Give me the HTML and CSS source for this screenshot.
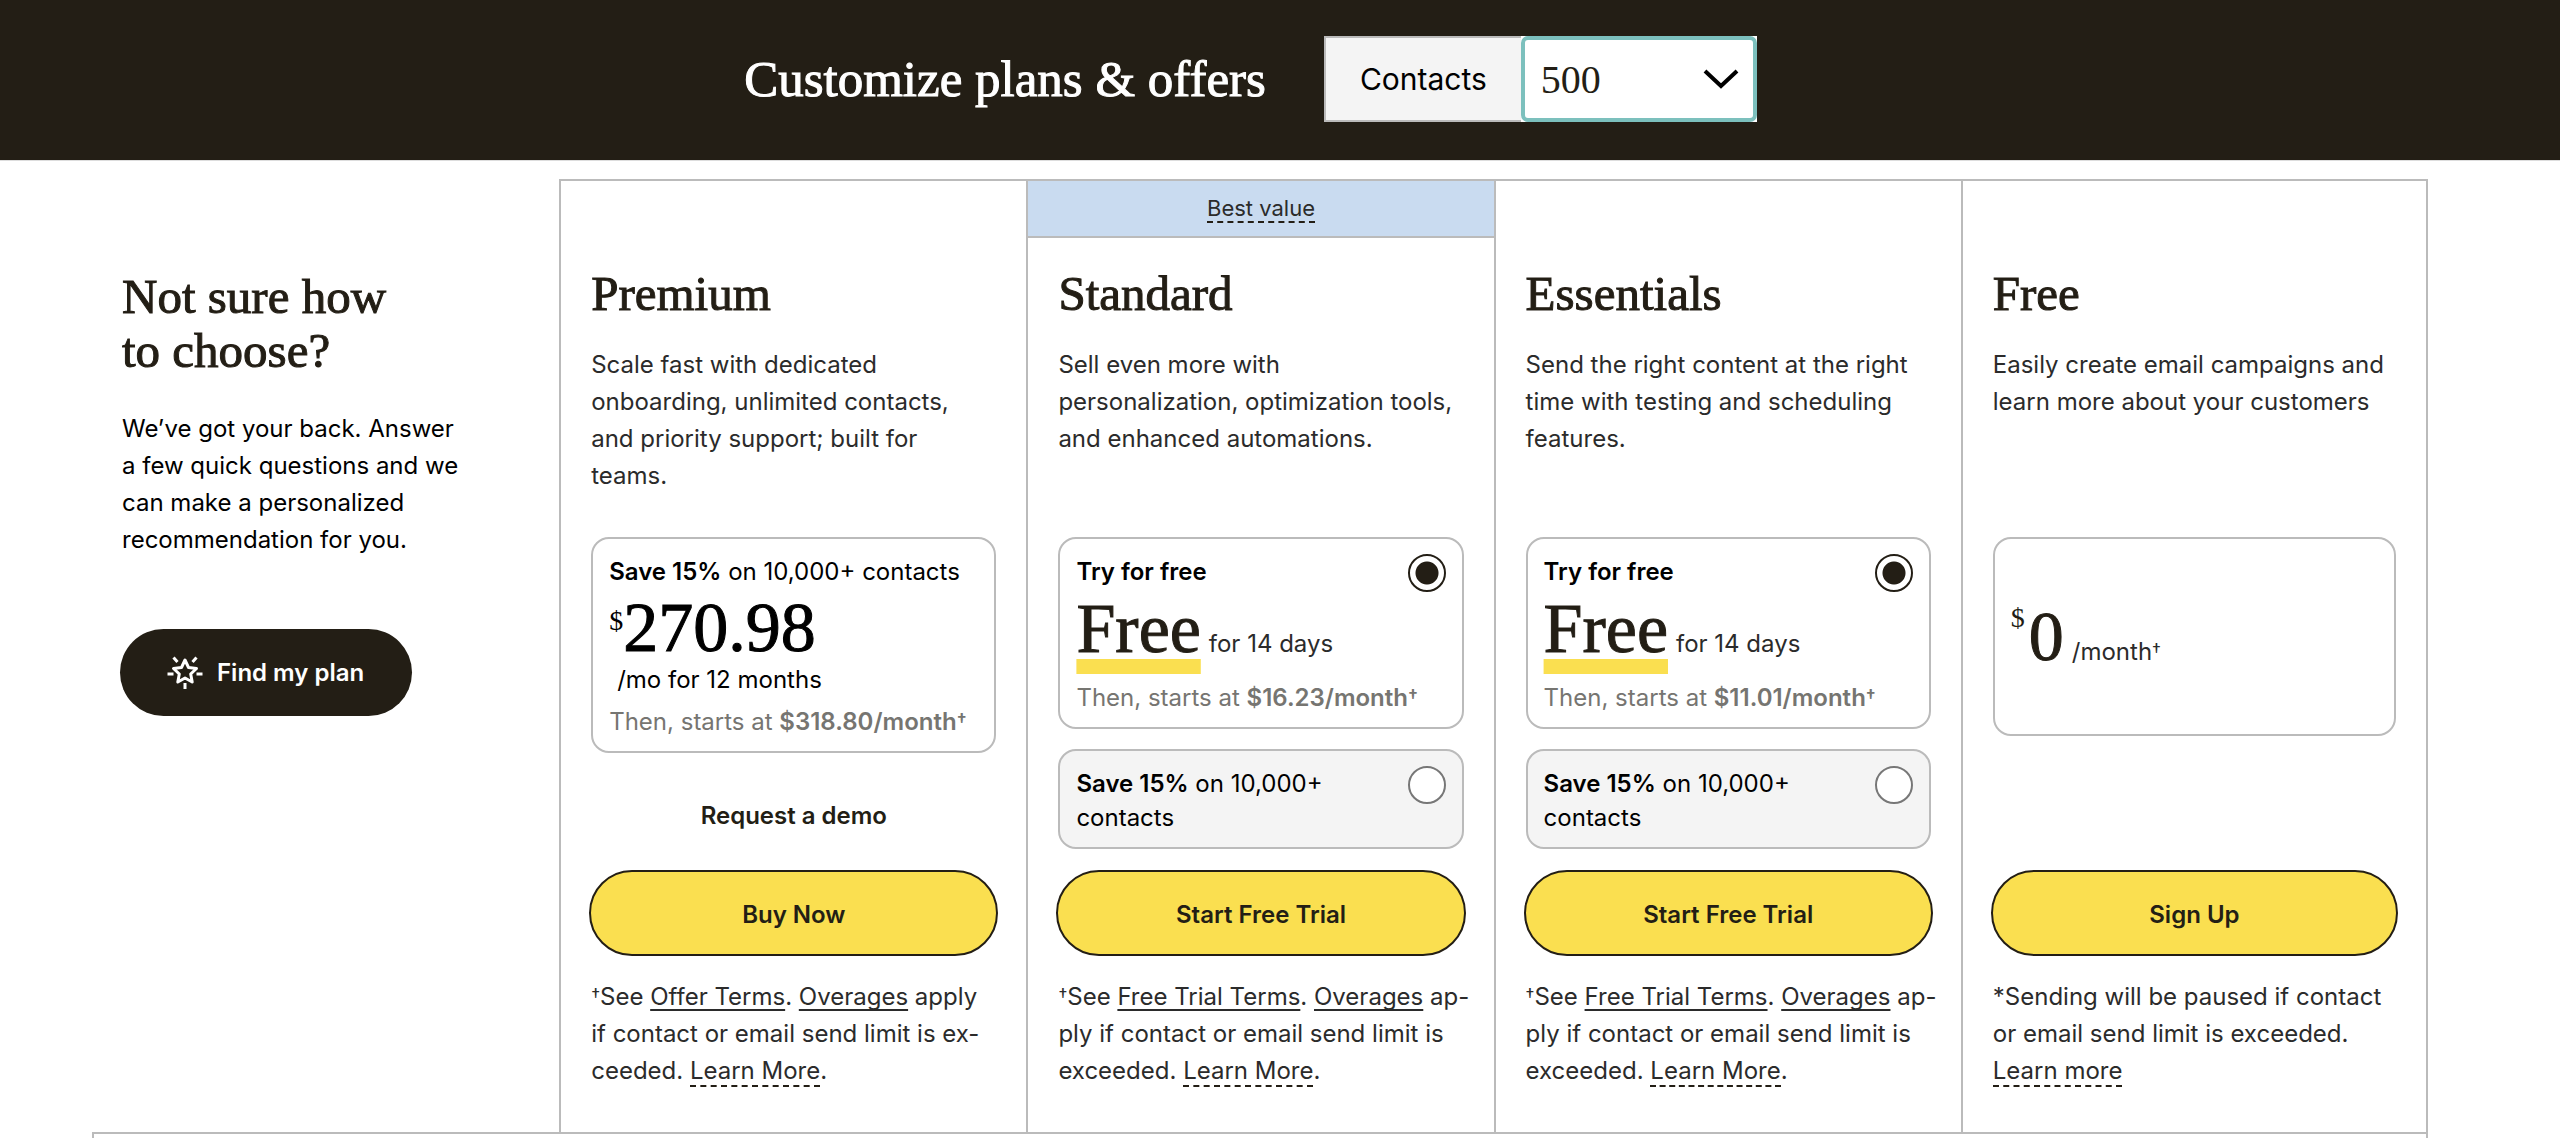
FILE: index.html
```html
<!DOCTYPE html>
<html lang="en">
<head>
    <meta charset="UTF-8">
    <meta name="viewport" content="width=device-width, initial-scale=1.0">
    <title>Pricing Plans</title>
    <link rel="stylesheet" href="styles.css">
</head>
<body>
    <header class="topbar">
        <h1>Customize plans &amp; offers</h1>
        <div class="contacts">
            <label for="contacts">Contacts</label>
            <div class="select-wrap">
                <select id="contacts">
                    <option>500</option>
                    <option>1,500</option>
                    <option>2,500</option>
                    <option>5,000</option>
                    <option>10,000</option>
                </select>
                <svg class="chevron" viewBox="0 0 36 22" aria-hidden="true"><path d="M2 3l16 15L34 3" fill="none" stroke="#000" stroke-width="4"/></svg>
            </div>
        </div>
    </header>

    <main class="pricing">
        <section class="help">
            <h2>Not sure how<br>to choose?</h2>
            <p>We’ve got your back. Answer<br>a few quick questions and we<br>can make a personalized<br>recommendation for you.</p>
            <button class="find-btn" type="button">
                <svg class="star" viewBox="0 0 36 34" aria-hidden="true" fill="none" stroke="#fff" stroke-width="3">
                    <path d="M18 4l3.500 7.500 8 1-5.800 5.500 1.500 8L18 22l-7.200 4 1.500-8-5.800-5.500 8-1z" stroke-linejoin="round"/>
                    <path d="M6.500 1.500l4 4.500M29.500 1.500l-4 4.500M0.500 18h6M29.500 18h6M18 27v6"/>
                </svg>
                Find my plan
            </button>
        </section>

        <section class="plan">
            <div class="badge"></div>
            <div class="plan-body">
                <h2>Premium</h2>
                <p class="desc">Scale fast with dedicated<br>onboarding, unlimited contacts,<br>and priority support; built for<br>teams.</p>
                <div class="options">
                    <div class="card">
                        <div><b>Save 15%</b> on 10,000+ contacts</div>
                        <div class="price black"><span class="currency">$</span><span class="amount">270.98</span></div>
                        <div class="term">/mo for 12 months</div>
                        <div class="then">Then, starts at <b>$318.80/month<span class="dagger">†</span></b></div>
                    </div>
                    <a class="demo" href="#">Request a demo</a>
                </div>
                <button class="buy-btn" type="button">Buy Now</button>
                <p class="note"><span class="dagger">†</span>See <a href="#">Offer Terms</a>. <a href="#">Overages</a> apply<br>if contact or email send limit is ex-<br>ceeded. <a class="dashed" href="#">Learn More</a>.</p>
            </div>
        </section>

        <section class="plan">
            <div class="badge best"><a class="dashed" href="#">Best value</a></div>
            <div class="plan-body">
                <h2>Standard</h2>
                <p class="desc">Sell even more with<br>personalization, optimization tools,<br>and enhanced automations.</p>
                <div class="options">
                    <label class="card">
                        <span class="card-head"><b>Try for free</b><input type="radio" name="standard" checked></span>
                        <span class="price"><span class="amount free">Free</span><span class="unit">for 14 days</span></span>
                        <span class="then trial">Then, starts at <b>$16.23/month<span class="dagger">†</span></b></span>
                    </label>
                    <label class="card off">
                        <span class="card-head"><span><b>Save 15%</b> on 10,000+<br>contacts</span><input type="radio" name="standard"></span>
                    </label>
                </div>
                <button class="buy-btn" type="button">Start Free Trial</button>
                <p class="note"><span class="dagger">†</span>See <a href="#">Free Trial Terms</a>. <a href="#">Overages</a> ap-<br>ply if contact or email send limit is<br>exceeded. <a class="dashed" href="#">Learn More</a>.</p>
            </div>
        </section>

        <section class="plan">
            <div class="badge"></div>
            <div class="plan-body">
                <h2>Essentials</h2>
                <p class="desc">Send the right content at the right<br>time with testing and scheduling<br>features.</p>
                <div class="options">
                    <label class="card">
                        <span class="card-head"><b>Try for free</b><input type="radio" name="essentials" checked></span>
                        <span class="price"><span class="amount free">Free</span><span class="unit">for 14 days</span></span>
                        <span class="then trial">Then, starts at <b>$11.01/month<span class="dagger">†</span></b></span>
                    </label>
                    <label class="card off">
                        <span class="card-head"><span><b>Save 15%</b> on 10,000+<br>contacts</span><input type="radio" name="essentials"></span>
                    </label>
                </div>
                <button class="buy-btn" type="button">Start Free Trial</button>
                <p class="note"><span class="dagger">†</span>See <a href="#">Free Trial Terms</a>. <a href="#">Overages</a> ap-<br>ply if contact or email send limit is<br>exceeded. <a class="dashed" href="#">Learn More</a>.</p>
            </div>
        </section>

        <section class="plan">
            <div class="badge"></div>
            <div class="plan-body">
                <h2>Free</h2>
                <p class="desc">Easily create email campaigns and<br>learn more about your customers</p>
                <div class="options">
                    <div class="card zero">
                        <div class="price"><span class="currency">$</span><span class="amount">0</span><span class="unit">/month<span class="dagger">†</span></span></div>
                    </div>
                </div>
                <button class="buy-btn" type="button">Sign Up</button>
                <p class="note">*Sending will be paused if contact<br>or email send limit is exceeded.<br><a class="dashed" href="#">Learn more</a></p>
            </div>
        </section>
    </main>

    <div class="features"></div>
</body>
</html>
```

FILE: styles.css
```css
* {
    box-sizing: border-box;
}
body {
    margin: 0;
    font-family: Inter, "Liberation Sans", sans-serif;
    font-size: 24px;
    line-height: 37px;
    color: #2b2b2b;
    background: #fff;
}
h1, h2, p {
    margin: 0;
}
h1, h2, .amount, .currency, select {
    font-family: "Liberation Serif", serif;
    font-weight: 400;
}
b {
    font-weight: 600;
}
a {
    color: inherit;
    text-underline-offset: 4px;
    text-decoration-thickness: 2px;
    text-decoration-skip-ink: none;
}
button {
    font: inherit;
    font-weight: 600;
    cursor: pointer;
}
.dashed {
    text-decoration: none;
    border-bottom: 2px dashed #231e15;
}
.dagger {
    font-size: 18px;
    line-height: 1;
    vertical-align: 3px;
}

/* Top bar */
.topbar {
    display: flex;
    align-items: center;
    justify-content: center;
    gap: 58px;
    height: 161px;
    padding: 0 59px 2px 0;
    border-bottom: 1px solid #ddd;
    background: #231e15;
}
.topbar h1 {
    font-size: 51px;
    line-height: 60px;
    color: #fff;
    -webkit-text-stroke: 1px #fff;
}
.contacts {
    display: flex;
    height: 86px;
    background: #fff;
}
.contacts label {
    display: flex;
    align-items: center;
    padding: 0 34px;
    border: 2px solid #bbb;
    border-right: none;
    background: #f4f4f4;
    font-size: 30px;
    color: #000;
}
.select-wrap {
    position: relative;
    display: flex;
}
.contacts select {
    width: 236px;
    padding: 0 16px;
    border: 4px solid #7cc0bd;
    border-radius: 7px;
    background: #fff;
    font-size: 40px;
    color: #231e15;
    appearance: none;
}
.chevron {
    position: absolute;
    right: 18px;
    top: 32px;
    width: 36px;
    height: 22px;
    pointer-events: none;
}

/* Plans */
.pricing {
    display: grid;
    grid-template-columns: repeat(5, minmax(0, 1fr));
    margin: 0 132px 0 92px;
    padding-top: 18px;
}
h2 {
    font-size: 49px;
    line-height: 54px;
    color: #231e15;
    -webkit-text-stroke: 1px #231e15;
}
.help {
    padding: 91px 0 0 30px;
    color: #000;
}
.help p {
    margin-top: 32px;
}
.find-btn {
    display: flex;
    align-items: center;
    gap: 14px;
    height: 87px;
    margin: 71px 0 0 -2px;
    padding: 0 48px 0 47px;
    border: none;
    border-radius: 44px;
    background: #231e15;
    color: #fff;
}
.star {
    width: 36px;
    height: 34px;
}
.plan {
    border-top: 2px solid #bbb;
    border-left: 2px solid #bbb;
}
.plan:last-child {
    border-right: 2px solid #bbb;
}
.badge {
    height: 57px;
    font-size: 22px;
    line-height: 26px;
    text-align: center;
}
.badge.best {
    padding-top: 14px;
    border-bottom: 2px solid #bbb;
    background: #c9dbf0;
}
.plan-body {
    padding: 29px 30px 43px;
}
.desc {
    min-height: 148px;
    margin-top: 25px;
    white-space: nowrap;
}
.options {
    display: flex;
    flex-direction: column;
    gap: 20px;
    min-height: 312px;
    margin: 43px 0 21px;
}
.card {
    display: block;
    padding: 16px 16px 12px;
    border: 2px solid #bbb;
    border-radius: 18px;
    line-height: 34px;
    color: #000;
    white-space: nowrap;
}
.card.off {
    background: #f4f4f4;
}
.card.zero {
    display: flex;
    align-items: center;
    min-height: 199px;
    padding: 0 16px;
}
.card-head {
    display: flex;
    justify-content: space-between;
    height: 34px;
}
.off .card-head {
    height: 68px;
}
input[type="radio"] {
    flex: none;
    width: 38px;
    height: 38px;
    margin: -1px 0 0;
    border: 2px solid #777;
    border-radius: 50%;
    background: #fff;
    appearance: none;
}
input[type="radio"]:checked {
    border-color: #231e15;
    background: radial-gradient(circle, #231e15 11px, #fff 12px);
}
.price {
    display: flex;
    align-items: baseline;
    color: #231e15;
}
.price.black {
    color: #000;
}
.currency {
    align-self: flex-start;
    margin-top: 15px;
    font-size: 28px;
}
.zero .currency {
    margin-top: 3px;
    padding-right: 4px;
}
.amount {
    font-size: 70px;
    line-height: 78px;
    -webkit-text-stroke: 1px currentColor;
}
.amount.free {
    line-height: 80px;
    text-decoration: underline 15px #fadf50;
    text-underline-offset: 7px;
    text-decoration-skip-ink: none;
}
.unit {
    padding-left: 8px;
    color: #2b2b2b;
}
.term {
    margin-top: -4px;
    padding-left: 8px;
}
.then {
    display: block;
    margin-top: 8px;
    color: #767571;
}
.then.trial {
    margin-top: 12px;
}
.demo {
    margin: auto;
    padding-top: 8px;
    font-weight: 600;
    text-decoration: none;
    color: #231e15;
}
.buy-btn {
    display: block;
    width: calc(100% + 4px);
    height: 86px;
    margin: 0 -2px 22px;
    padding: 2px 0 0;
    border: 2px solid #231e15;
    border-radius: 43px;
    background: #fadf50;
    color: #231e15;
}
.note {
    white-space: nowrap;
}

/* Feature table below the plans */
.features {
    height: 6px;
    margin: 0 132px 0 92px;
    border: 2px solid #bbb;
    border-bottom: none;
}
```
